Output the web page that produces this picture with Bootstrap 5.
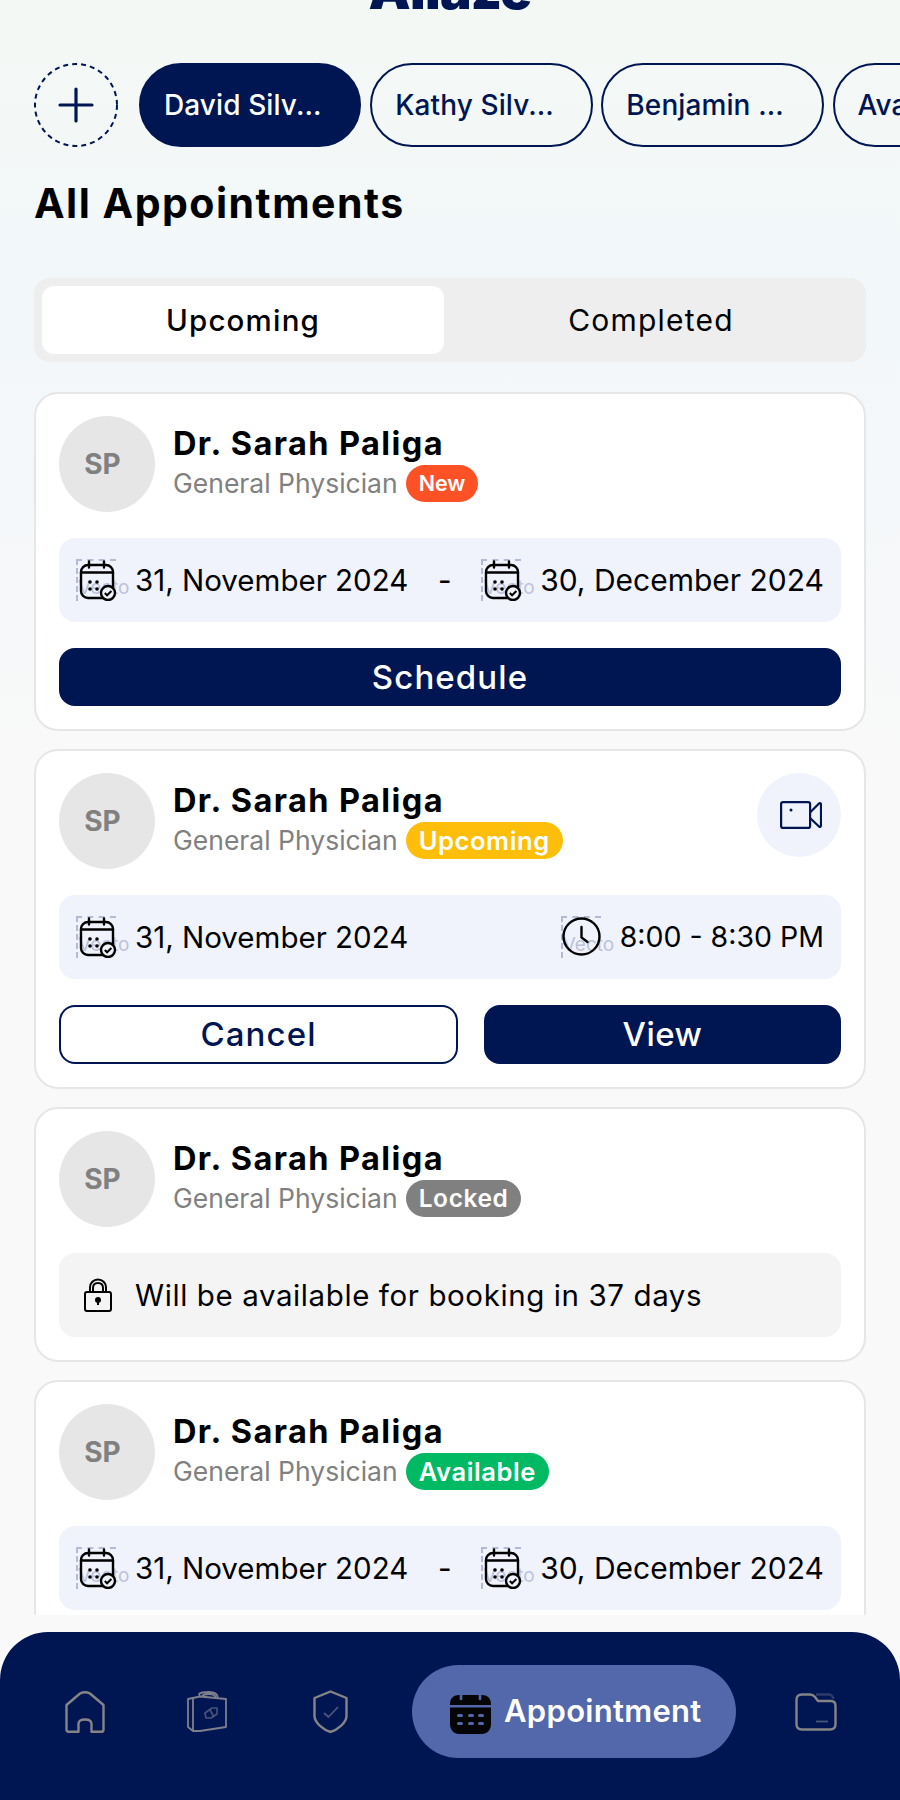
<!DOCTYPE html>
<html lang="en">
<head>
<meta charset="utf-8">
<title>All Appointments</title>
<link href="https://cdn.jsdelivr.net/npm/bootstrap@5.3.0/dist/css/bootstrap.min.css" rel="stylesheet">
<style>
html,body{height:1800px;overflow:hidden}
body{width:900px;font-family:Inter,"Liberation Sans",sans-serif;color:#000;background:linear-gradient(180deg,#f4f8f4 0,#f2f7fa 300px,#f9f9f9 800px,#f9f9f9 100%)}
.shell{height:1800px}
.logo-clip{height:63px;overflow:hidden;text-align:center}
.logo-word{display:block;font-weight:900;font-size:53px;line-height:54px;margin-top:-37px;color:#001653;letter-spacing:-.7px}
.member-strip{padding-left:34px;gap:8.7px;overflow:hidden;height:84px}
.add-circle{flex:0 0 84px;width:84px;height:84px;margin-right:12.3px}
.member-pill{flex:0 0 222.5px;height:84px;border:2px solid #001653;border-radius:42px;color:#001653;background:transparent;font-size:28px;font-weight:500;padding:0 0 0 23px;white-space:nowrap;letter-spacing:.1px}
.member-pill.on{background:#001653;color:#fff}
.page-title{font-size:41px;font-weight:700;line-height:48px;margin:32px 0 0 34px;letter-spacing:1.5px}
.tabs-box{margin:51px 34px 0;height:84px;padding:8px;background:#eee;border-radius:16px}
.tab-item{flex:1;border-radius:12px;font-size:30px;color:#000;letter-spacing:1.2px}
.tab-item.on{flex:0 0 402px;background:#fff;font-weight:500;font-size:29.5px}
.scroller{flex:0 0 1223px;height:1223px;margin-top:30px;overflow:hidden}
.appt{margin:0 34px 18px;padding:22px 23px 23px;background:#fff;border:2px solid #e6e6e6;border-radius:24px}
.appt .gap-row{margin-top:26px}
.avatar{flex:0 0 96px;width:96px;height:96px;background:#e6e6e6;border-radius:50%;color:#808080;font-size:28px;font-weight:700;padding-right:9px}
.who{padding-left:18px;flex:1}
.who-name{font-size:32.5px;font-weight:700;line-height:40px;margin-top:8px;letter-spacing:1.4px}
.who-spec{font-size:26.5px;line-height:38px;color:#808080}
.tag{height:37px;line-height:37px;border-radius:18.5px;color:#fff;font-size:25.5px;font-weight:600;padding:0 13px;margin-left:8px;letter-spacing:.6px}
.tag-new{background:#ff5126;font-size:21.5px;letter-spacing:0}
.tag-up{background:#ffbe0a}.tag-lock{background:#808080;letter-spacing:.6px;font-size:24.5px}.tag-ok{background:#00ba63}
.call{flex:0 0 84px;width:84px;height:84px;border-radius:50%;background:#f0f3fb}
.call svg{margin-left:4px}
.info-row{height:84px;background:#f0f3fb;border-radius:16px;padding:0 17px;font-size:29.5px;white-space:nowrap}
.info-row.muted{background:#f4f4f4;padding-left:25px;letter-spacing:.6px}
.lock-ico{margin-right:23px;flex:none}
.time-txt{font-size:28.5px}
.date-wide{font-size:30px}
.dash{width:15px;text-align:center}
.ico-slot{position:relative;flex:0 0 40px;width:40px;height:42px;margin-right:19px;border-left:2px dashed #b4b9d4;border-top:2px dashed #b4b9d4}
.ghost{position:absolute;left:0;top:15px;font-size:19px;line-height:24px;color:#bcc2da;white-space:nowrap}
.ico-slot svg{position:absolute;left:-2px;top:-2px}
.act{height:58px;border-radius:16px;font-size:33px;font-weight:500;line-height:1;padding:0;border:2px solid #001653;letter-spacing:1.1px}
.act-fill,.act-fill:hover{background:#001653;color:#fff}
.act-line{background:#fff;color:#001653}
.cancel-btn{flex:0 0 399px;height:59px}
.view-btn{flex:0 0 357px;height:59px;letter-spacing:.5px}
.bottom-bar{height:168px;margin-top:17px;background:#001653;border-radius:48px 48px 0 0;padding-top:33px}
.nav-row{height:93px}
.home-ico{margin-left:65px}
.case-ico{margin-left:82px}
.shield-ico{margin-left:85px}
.bar-pill{margin-left:64px;flex:0 0 324px;height:93px;border-radius:47px;background:#5367ab;color:#fff;font-size:31px;font-weight:600;padding-left:38px;gap:13px;letter-spacing:.3px}
.folder-ico{margin-left:59px}
</style>
</head>
<body>
<div class="shell d-flex flex-column">
  <div class="logo-clip"><span class="logo-word">Allaze</span></div>

  <div class="member-strip d-flex align-items-center">
    <button type="button" class="add-circle btn p-0 border-0" aria-label="Add member">
      <svg width="84" height="84" viewBox="0 0 84 84" fill="none"><circle cx="42" cy="42" r="41" stroke="#001653" stroke-width="2" stroke-dasharray="5 4"/><path d="M42 26v32M26 42h32" stroke="#001653" stroke-width="3.2" stroke-linecap="round"/></svg>
    </button>
    <div class="member-pill on d-flex align-items-center">David Silv...</div>
    <div class="member-pill d-flex align-items-center">Kathy Silv...</div>
    <div class="member-pill d-flex align-items-center">Benjamin ...</div>
    <div class="member-pill d-flex align-items-center">Ava Silv...</div>
  </div>

  <h1 class="page-title">All Appointments</h1>

  <div class="tabs-box d-flex">
    <div class="tab-item on d-flex align-items-center justify-content-center">Upcoming</div>
    <div class="tab-item d-flex align-items-center justify-content-center">Completed</div>
  </div>

  <svg width="0" height="0" class="position-absolute">
    <defs>
      <symbol id="cal-check" viewBox="0 0 42 42">
        <rect x="5" y="6" width="32" height="33" rx="7" fill="none" stroke="#000" stroke-width="2.400"/>
        <path d="M5 13.500H37M13 2.500V8.500M28 2.500V8.500" stroke="#000" stroke-width="2.400" stroke-linecap="round"/>
        <circle cx="14" cy="23" r="1.800" fill="#000"/><circle cx="21" cy="23" r="1.800" fill="#000"/><circle cx="14" cy="30" r="1.800" fill="#000"/><circle cx="21" cy="30" r="1.800" fill="#000"/>
        <circle cx="32" cy="34" r="7" fill="#f0f3fb" stroke="#000" stroke-width="2.400"/>
        <path d="M28.800 34l2.300 2.300 4.300-4.300" fill="none" stroke="#000" stroke-width="2"/>
      </symbol>
    </defs>
  </svg>

  <div class="scroller">
    <!-- card 1 -->
    <div class="appt">
      <div class="d-flex">
        <div class="avatar d-flex align-items-center justify-content-center">SP</div>
        <div class="who">
          <div class="who-name">Dr. Sarah Paliga</div>
          <div class="who-spec d-flex align-items-center">General Physician<span class="tag tag-new">New</span></div>
        </div>
      </div>
      <div class="info-row gap-row d-flex align-items-center justify-content-between">
        <div class="d-flex align-items-center"><span class="ico-slot"><span class="ghost">Vecto</span><svg width="42" height="42"><use href="#cal-check"/></svg></span>31, November 2024</div>
        <span class="dash">-</span>
        <div class="d-flex align-items-center date-wide"><span class="ico-slot"><span class="ghost">Vecto</span><svg width="42" height="42"><use href="#cal-check"/></svg></span>30, December 2024</div>
      </div>
      <button type="button" class="btn act act-fill w-100 gap-row d-block">Schedule</button>
    </div>
    <!-- card 2 -->
    <div class="appt">
      <div class="d-flex">
        <div class="avatar d-flex align-items-center justify-content-center">SP</div>
        <div class="who">
          <div class="who-name">Dr. Sarah Paliga</div>
          <div class="who-spec d-flex align-items-center">General Physician<span class="tag tag-up">Upcoming</span></div>
        </div>
        <div class="call d-flex align-items-center justify-content-center">
          <svg width="42" height="28" viewBox="0 0 42 28" fill="none" stroke="#001653" stroke-width="2.200"><rect x="1.100" y="1.100" width="29" height="25.800" rx="2"/><path d="M30 11.500L39 2.500C40 1.800 41 2.200 41 3.500V24.500C41 25.800 40 26.200 39 25.500L30 17" stroke-linejoin="round"/><circle cx="11" cy="9" r="1.500" fill="#001653" stroke="none"/></svg>
        </div>
      </div>
      <div class="info-row gap-row d-flex align-items-center justify-content-between">
        <div class="d-flex align-items-center"><span class="ico-slot"><span class="ghost">Vecto</span><svg width="42" height="42"><use href="#cal-check"/></svg></span>31, November 2024</div>
        <div class="d-flex align-items-center time-txt"><span class="ico-slot"><span class="ghost">Vecto</span><svg width="42" height="42" viewBox="0 0 42 42" fill="none" stroke="#000" stroke-width="2.400"><circle cx="20.500" cy="20.500" r="18"/><path d="M20.500 11V21.500L26.500 26" stroke-linecap="round"/></svg></span>8:00 - 8:30 PM</div>
      </div>
      <div class="d-flex justify-content-between gap-row">
        <button type="button" class="btn act act-line cancel-btn">Cancel</button>
        <button type="button" class="btn act act-fill view-btn">View</button>
      </div>
    </div>
    <!-- card 3 -->
    <div class="appt">
      <div class="d-flex">
        <div class="avatar d-flex align-items-center justify-content-center">SP</div>
        <div class="who">
          <div class="who-name">Dr. Sarah Paliga</div>
          <div class="who-spec d-flex align-items-center">General Physician<span class="tag tag-lock">Locked</span></div>
        </div>
      </div>
      <div class="info-row muted gap-row d-flex align-items-center">
        <svg class="lock-ico" width="28" height="34" viewBox="0 0 28 34" fill="none" stroke="#000" stroke-width="2"><rect x="1" y="14" width="26" height="19" rx="2"/><path d="M6 14V9.500C6 5 9.500 1.500 14 1.500S22 5 22 9.500V14M9 14V10C9 7 11 5 14 5S19 7 19 10V14"/><circle cx="14" cy="22" r="2" fill="#000"/><path d="M14 23V27"/></svg>
        Will be available for booking in 37 days
      </div>
    </div>
    <!-- card 4 -->
    <div class="appt">
      <div class="d-flex">
        <div class="avatar d-flex align-items-center justify-content-center">SP</div>
        <div class="who">
          <div class="who-name">Dr. Sarah Paliga</div>
          <div class="who-spec d-flex align-items-center">General Physician<span class="tag tag-ok">Available</span></div>
        </div>
      </div>
      <div class="info-row gap-row d-flex align-items-center justify-content-between">
        <div class="d-flex align-items-center"><span class="ico-slot"><span class="ghost">Vecto</span><svg width="42" height="42"><use href="#cal-check"/></svg></span>31, November 2024</div>
        <span class="dash">-</span>
        <div class="d-flex align-items-center date-wide"><span class="ico-slot"><span class="ghost">Vecto</span><svg width="42" height="42"><use href="#cal-check"/></svg></span>30, December 2024</div>
      </div>
    </div>
  </div>

  <nav class="bottom-bar">
    <div class="nav-row d-flex align-items-center">
      <svg class="home-ico" width="40" height="42" viewBox="0 0 40 42" fill="none" stroke="#858585" stroke-width="2.400" stroke-linejoin="round"><path d="M1.500 14L15 2.500Q20 0 25 2.500L38.500 14V38.500Q38.500 40.800 36.500 40.800H26.500V33Q26.500 28.500 20 28.500T13.500 33V40.800H3.500Q1.500 40.800 1.500 38.500Z"/></svg>
      <svg class="case-ico" width="41" height="42" viewBox="0 0 41 42" fill="none" stroke="#7e7f8c" stroke-width="1.800" stroke-linejoin="round"><path d="M1 8L13 5.500 39 8V36L13 40 6 40 1 36ZM6 7V40M13 5.500L12 3Q14 1 22 1 30 1 31 6.500M15 5Q17 3 22 3 28 3 29 7"/><path d="M18 22L25 17H30L30 23 24 27H19Z" stroke="#4b5479" stroke-width="1.600"/><path d="M23 19L27 26" stroke="#4b5479" stroke-width="1.600"/></svg>
      <svg class="shield-ico" width="35" height="43" viewBox="0 0 35 43" fill="none" stroke="#858585" stroke-width="2.400" stroke-linejoin="round"><path d="M17.500 1.500L33.500 8V26C33.500 33 24 40 17.500 42 11 40 1.500 33 1.500 26V8Z"/><path d="M11 23L15.500 27 25 17" stroke="#4b5479" stroke-width="1.800"/></svg>
      <div class="bar-pill d-flex align-items-center">
        <svg width="41" height="44" viewBox="0 0 41 44"><path d="M0 14C0 8 4 5 9 5H32C37 5 41 8 41 14V15H0ZM0 17.500H41V34C41 40 37 44 32 44H9C4 44 0 40 0 34Z" fill="#050505"/><path d="M11 1V9M30 1V9" stroke="#5367ab" stroke-width="2.600" stroke-linecap="round"/><g fill="#5367ab"><rect x="7" y="24" width="6" height="3" rx="1.500"/><rect x="18" y="24" width="6" height="3" rx="1.500"/><rect x="28" y="24" width="6" height="3" rx="1.500"/><rect x="7" y="32" width="6" height="3" rx="1.500"/><rect x="18" y="32" width="6" height="3" rx="1.500"/><rect x="28" y="32" width="6" height="3" rx="1.500"/></g></svg>
        <span>Appointment</span>
      </div>
      <svg class="folder-ico" width="42" height="38" viewBox="0 0 42 38" fill="none" stroke="#858585" stroke-width="2.400" stroke-linejoin="round"><path d="M1.500 7Q1.500 1.500 7 1.500H15Q18 1.500 20 4L23 8H36Q40.500 8 40.500 13V31Q40.500 36.500 35 36.500H7Q1.500 36.500 1.500 31Z"/><path d="M21 1.500H35Q38 3 38.500 6" stroke="#2e3b6b"/><path d="M21 28.500H33" stroke="#4b5479" stroke-width="1.800"/></svg>
    </div>
  </nav>
</div>
</body>
</html>
